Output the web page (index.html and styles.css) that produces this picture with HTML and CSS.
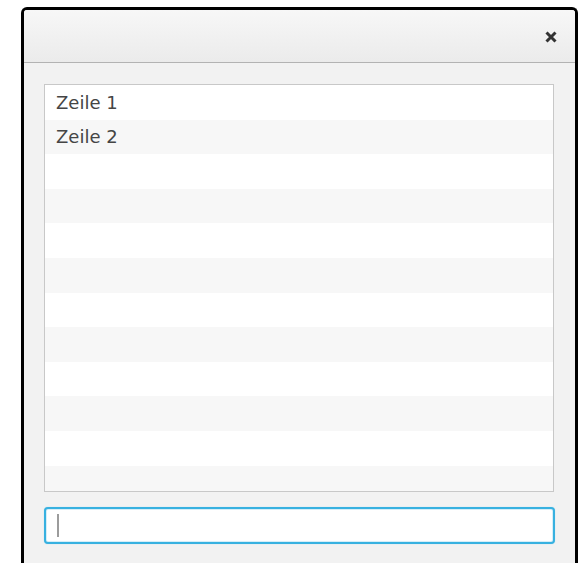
FILE: index.html
```html
<!DOCTYPE html>
<html lang="de">
<head>
<meta charset="utf-8">
<title>Liste</title>
<link rel="stylesheet" href="styles.css">
</head>
<body>
  <div class="window">
    <div class="titlebar">
      <button class="close" aria-label="Schließen">
        <svg width="12" height="12" viewBox="0 0 12 12">
          <path d="M1.5 1.5 L10.5 10.5 M10.5 1.5 L1.5 10.5" stroke="#333" stroke-width="3" stroke-linecap="butt"/>
        </svg>
      </button>
    </div>
    <div class="content">
      <ul class="list">
        <li class="row">Zeile 1</li>
        <li class="row">Zeile 2</li>
        <li class="row"></li>
        <li class="row"></li>
        <li class="row"></li>
        <li class="row"></li>
        <li class="row"></li>
        <li class="row"></li>
        <li class="row"></li>
        <li class="row"></li>
        <li class="row"></li>
        <li class="row"></li>
      </ul>
      <div class="field"><span class="caret"></span></div>
    </div>
  </div>
</body>
</html>
```
FILE: styles.css
```css
html, body {
  margin: 0;
  padding: 0;
  background: #ffffff;
  overflow: hidden;
}

body {
  font-family: "DejaVu Sans", sans-serif;
}

.window {
  box-sizing: border-box;
  width: 557px;
  height: 570px;
  margin: 7px 0 0 21px;
  border: 3px solid #000;
  border-bottom: none;
  border-radius: 6px 6px 0 0;
  background: #f2f2f2;
  display: flex;
  flex-direction: column;
  overflow: hidden;
}

.titlebar {
  height: 52px;
  flex: none;
  border-bottom: 1px solid #b3b3b3;
  background: linear-gradient(#f7f7f7, #ebebeb);
  display: flex;
  align-items: center;
  justify-content: flex-end;
  padding-right: 18px;
}

.close {
  border: none;
  background: transparent;
  padding: 0;
  margin: 2px 0 0 0;
  width: 12px;
  height: 12px;
  display: block;
}

.close svg {
  display: block;
}

.content {
  padding: 21px 20px 0 20px;
  display: flex;
  flex-direction: column;
}

.list {
  list-style: none;
  margin: 0;
  padding: 0;
  box-sizing: border-box;
  width: 510px;
  height: 408px;
  border: 1px solid #c8c8c8;
  background: #ffffff;
  overflow: hidden;
}

.row {
  height: 34.6px;
  box-sizing: border-box;
  padding-left: 11px;
  display: flex;
  align-items: center;
  font-size: 18px;
  color: #454545;
  background: #ffffff;
}

.row:nth-child(even) {
  background: #f7f7f7;
}

.field {
  box-sizing: border-box;
  width: 511px;
  height: 37px;
  margin-top: 15px;
  border: 2px solid #38b1e0;
  border-radius: 4px;
  background: #ffffff;
  box-shadow: inset 0 0 0 1px #d6eef8, 0 0 1px #8fd3ee;
  display: flex;
  align-items: center;
  padding-left: 11px;
}

.caret {
  width: 2px;
  height: 23px;
  background: #9c9c9c;
}
```
